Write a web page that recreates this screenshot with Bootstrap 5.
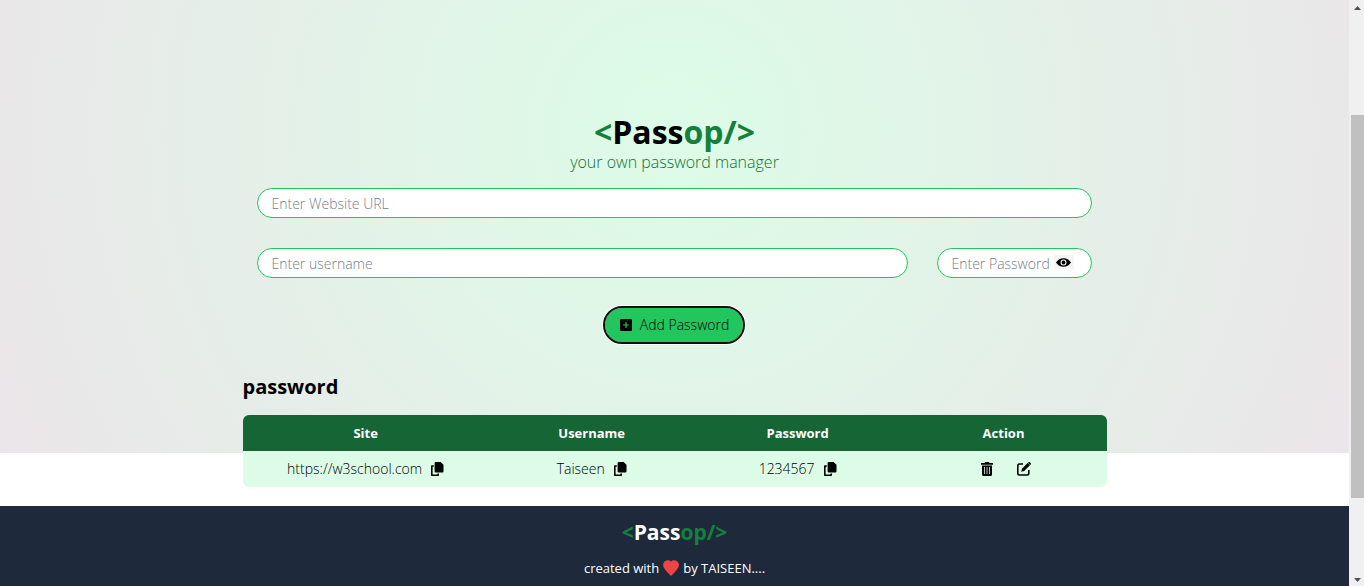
<!DOCTYPE html>
<html lang="en">
<head>
<meta charset="utf-8">
<meta name="viewport" content="width=device-width, initial-scale=1">
<title>Passop - your own password manager</title>
<link href="https://cdn.jsdelivr.net/npm/bootstrap@5.3.0/dist/css/bootstrap.min.css" rel="stylesheet">
<style>
body { font-family: "Open Sans", "Noto Sans", sans-serif; font-size: 13px; line-height: 22px; color: #000; background: #fff; }
.page { background: radial-gradient(circle 760px at 50% 130px, #dcfce7, #ebe5e9) no-repeat top / 100% 453px; }
.manager { max-width: 864px; padding-top: 114px; }
.brand { font-size: 32px; line-height: 36px; font-weight: 700; }
.brand-green { color: #15803d; }
.tagline { font-size: 16px; line-height: 24px; font-weight: 300; color: #0f7034; }
.entry-form { padding: 14px 15px 15px 14px; gap: 30px; }
.field { height: 30px; border: 1px solid #22c55e; border-radius: 15px; padding: 0 14px; background: #fff; font-size: 14px; font-weight: 300; }
.field::placeholder { color: #757d8b; opacity: 1; }
.row-fields { gap: 29px; }
.pass-box { width: 155px; }
.eye-btn { right: 18px; top: 7px; width: 20px; height: 14px; background: #f5f5f5; }
.add-btn { height: 34px; padding: 0 14px; border-radius: 17px; background: #22c55e; outline: 2px solid #101010; outline-offset: 0; box-shadow: 0 0 0 3px #fff; gap: 7px; font-size: 14px; font-weight: 300; }
.section-title { font-size: 20px; line-height: 30px; margin: 15px 0 13px; }
.pass-table { border-radius: 6px; table-layout: fixed; }
.pass-table th, .pass-table td { height: 36px; padding: 0; text-align: center; vertical-align: middle; }
.pass-table thead { background: #166534; color: #fff; }
.pass-table tbody { background: #dcfce7; font-size: 14px; font-weight: 300; }
.site-col { width: 28.5%; }
.icon-btn { line-height: 0; }
.site-footer { background: #1e293b; color: #fff; margin-top: 19px; padding: 14px 0 7px; }
.footer-brand { font-size: 21px; line-height: 25px; font-weight: 700; }
.scroll-rail { width: 15px; background: #f0f0f0; }
.scroll-thumb { width: 13px; background: #c0c0c0; margin-top: 98px; height: 383px; }
</style>
</head>
<body>
<svg class="d-none" aria-hidden="true">
  <symbol id="copy" viewBox="0 0 14 14"><path d="M5.600 0h5L13.500 2.700V9.600a1 1 0 0 1-1 1H5.600a1 1 0 0 1-1-1V1a1 1 0 0 1 1-1z"/><path d="M3.800 4H1.800v9.200h6.400v-1.700" fill="none" stroke="currentColor" stroke-width="1.600" stroke-linejoin="round"/></symbol>
</svg>
<div class="d-flex align-items-stretch min-vh-100">
  <div class="page flex-grow-1 d-flex flex-column">
    <main class="manager w-100 mx-auto">
      <h1 class="brand text-center mb-0"><span class="brand-green">&lt;</span>Pass<span class="brand-green">op/&gt;</span></h1>
      <p class="tagline text-center mb-0">your own password manager</p>
      <form class="entry-form d-flex flex-column">
        <input class="field w-100" type="text" aria-label="Website URL" placeholder="Enter Website URL">
        <div class="row-fields d-flex">
          <input class="field flex-grow-1" type="text" aria-label="Username" placeholder="Enter username">
          <div class="pass-box position-relative flex-shrink-0">
            <input class="field w-100" type="password" aria-label="Password" placeholder="Enter Password">
            <button type="button" class="eye-btn position-absolute border-0 p-0 d-flex align-items-center justify-content-center" aria-label="Show password">
              <svg width="15" height="9" viewBox="0 0 15 9"><path fill-rule="evenodd" d="M0 4.500C1.800 1.700 4.300.2 7.500.2S13.200 1.700 15 4.500c-1.800 2.800-4.300 4.300-7.500 4.300S1.800 7.300 0 4.500zm4.500 0a3 3 0 1 0 6 0 3 3 0 0 0-6 0z"/><circle cx="7.500" cy="4.500" r="1.900"/></svg>
            </button>
          </div>
        </div>
        <button type="button" class="add-btn border-0 d-flex align-items-center align-self-center">
          <svg width="14" height="14" viewBox="0 0 14 14"><path fill-rule="evenodd" d="M2.200 1h9.600Q13 1 13 2.200v9.600q0 1.200-1.200 1.200H2.200Q1 13 1 11.800V2.200Q1 1 2.200 1zm4.200 3v2.400H4v1.200h2.400V10h1.200V7.600H10V6.400H7.600V4z"/></svg>
          Add Password
        </button>
      </form>
      <h2 class="section-title fw-bold">password</h2>
      <table class="pass-table w-100 overflow-hidden">
        <thead><tr><th class="site-col" scope="col">Site</th><th scope="col">Username</th><th scope="col">Password</th><th scope="col">Action</th></tr></thead>
        <tbody>
          <tr>
            <td><div class="d-flex align-items-center justify-content-center gap-2"><a class="text-reset text-decoration-none" href="https://w3school.com">https://w3school.com</a><button type="button" class="icon-btn border-0 p-0 bg-transparent" aria-label="Copy site"><svg width="14" height="14"><use href="#copy"/></svg></button></div></td>
            <td><div class="d-flex align-items-center justify-content-center gap-2">Taiseen<button type="button" class="icon-btn border-0 p-0 bg-transparent" aria-label="Copy username"><svg width="14" height="14"><use href="#copy"/></svg></button></div></td>
            <td><div class="d-flex align-items-center justify-content-center gap-2">1234567<button type="button" class="icon-btn border-0 p-0 bg-transparent" aria-label="Copy password"><svg width="14" height="14"><use href="#copy"/></svg></button></div></td>
            <td><div class="d-flex align-items-center justify-content-center gap-4 ps-1">
              <button type="button" class="icon-btn border-0 p-0 bg-transparent" aria-label="Delete"><svg width="12" height="14" viewBox="0 0 12 14"><path d="M4 0h4l.5 1H12v1.700H0V1h3.500z"/><path fill-rule="evenodd" d="M1 3.500h10V12.500Q11 14 9.500 14h-7Q1 14 1 12.500zM3.100 5v7h.8V5zm2.500 0v7h.8V5zm2.500 0v7h.8V5z"/></svg></button>
              <button type="button" class="icon-btn border-0 p-0 bg-transparent" aria-label="Edit"><svg width="14" height="14" viewBox="0 0 14 14"><path d="M6 2H2.500Q.8 2 .8 3.700v7.600Q.8 13 2.500 13h7.600q1.700 0 1.700-1.700V8" fill="none" stroke="#000" stroke-width="1.600"/><path d="M10.600 1l2.300 2.300-5.700 5.600-3 .8.8-3zM11.200.5q1-.9 1.900 0l.4.4q.9.900 0 1.900l-.3.300-2.300-2.300z"/></svg></button>
            </div></td>
          </tr>
        </tbody>
      </table>
    </main>
    <footer class="site-footer flex-grow-1 text-center">
      <div class="footer-brand"><span class="brand-green">&lt;</span>Pass<span class="brand-green">op/&gt;</span></div>
      <div class="d-flex align-items-center justify-content-center mt-2 pt-1">created with <svg class="mx-1" width="16" height="16" viewBox="0 0 16 16"><path fill="#ef4444" d="M8 1.800C9.200.1 12 0 13.700 1 16 2.500 16.500 5.500 15 8c-1.500 3-4.500 5-7 8-2.500-3-5.500-5-7-8C-.5 5.500 0 2.500 2.300 1 4 0 6.800.1 8 1.800z"/></svg>by TAISEEN....</div>
    </footer>
  </div>
  <div class="scroll-rail flex-shrink-0 d-flex flex-column align-items-end" aria-hidden="true">
    <svg width="13" height="17" viewBox="0 0 13 17"><path fill="#505050" d="M3 10l3.500-4L10 10z"/></svg>
    <div class="scroll-thumb"></div>
    <svg class="mt-auto" width="13" height="17" viewBox="0 0 13 17"><path fill="#505050" d="M3 9l3.500 4L10 9z"/></svg>
  </div>
</div>
<script src="https://cdn.jsdelivr.net/npm/bootstrap@5.3.0/dist/js/bootstrap.bundle.min.js"></script>
</body>
</html>
